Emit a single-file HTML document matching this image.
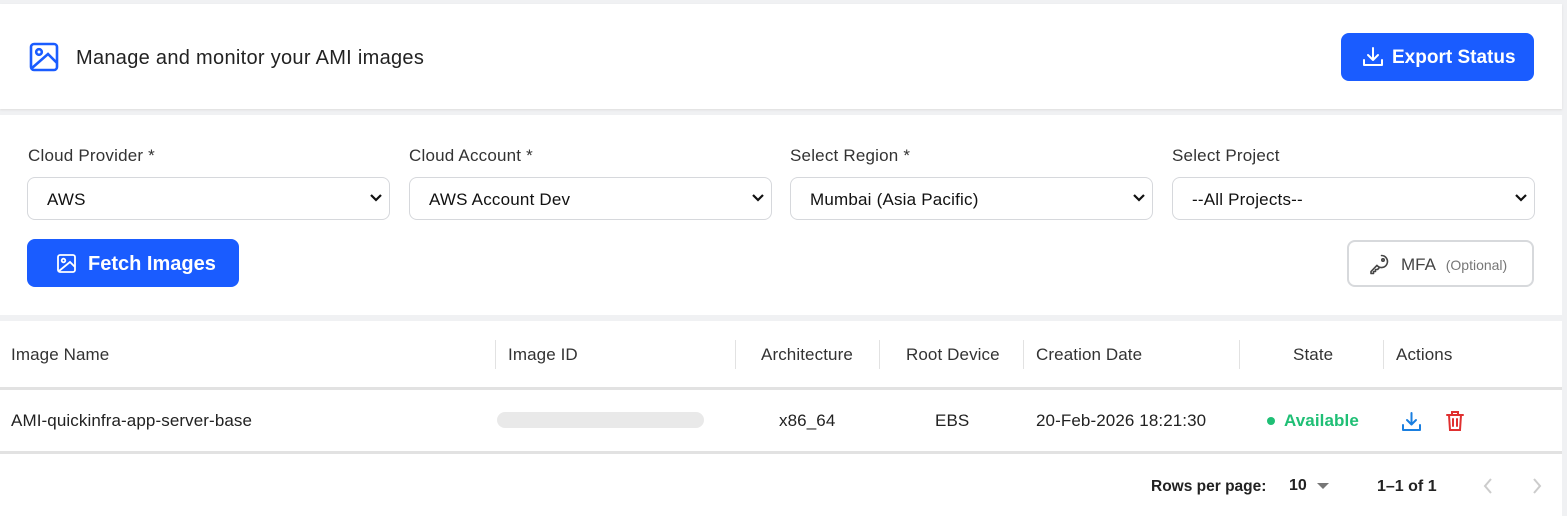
<!DOCTYPE html>
<html><head><meta charset="utf-8"><style>
*{box-sizing:border-box;margin:0;padding:0}
body{width:1567px;height:516px;background:#f0f1f3;font-family:"Liberation Sans",sans-serif;position:relative;overflow:hidden;color:#222}
.card{position:absolute;left:0;width:1562px;background:#fff}
.a{position:absolute;white-space:nowrap}
.sel{position:absolute;top:177px;width:363px;height:43px;border:1px solid #d6d8dc;border-radius:8px;font-size:17px;color:#111;padding:12px 0 0 19px;letter-spacing:0.2px}
.sel svg{position:absolute;right:6px;top:15px}
.lbl{position:absolute;top:146px;font-size:17px;color:#333;letter-spacing:0.2px}
.th{position:absolute;top:345px;font-size:17px;color:#333;letter-spacing:0.1px}
.vl{position:absolute;top:340px;width:1px;height:29px;background:#e2e2e2}
.td{position:absolute;top:411px;font-size:17px;color:#222;letter-spacing:0.1px}
</style></head><body>
<div class="card" style="top:4px;height:105px;box-shadow:0 1px 2px #ddd"></div>
<svg class="a" style="left:29px;top:42px" width="30" height="30" viewBox="0 0 30 30" fill="none" stroke="#1a5cff" stroke-width="2.6"><rect x="2" y="2" width="26" height="26" rx="3"/><circle cx="10" cy="10" r="2.8"/><path d="M3 26 L19 12 L28 21"/></svg>
<div class="a" style="left:76px;top:47px;font-size:20px;color:#222;letter-spacing:0.3px">Manage and monitor your AMI images</div>
<div class="a" style="left:1341px;top:33px;width:193px;height:48px;background:#1a5cff;border-radius:8px;color:#fff;font-size:19px;font-weight:bold;padding:14px 0 0 51px">Export Status</div>
<svg class="a" style="left:1362px;top:46px" width="22" height="22" viewBox="0 0 22 22" fill="none" stroke="#fff" stroke-width="2" stroke-linecap="round" stroke-linejoin="round"><path d="M11 2v12M6 9l5 5 5-5M2 14v5h18v-5"/></svg>

<div class="card" style="top:115px;height:200px"></div>
<div class="lbl" style="left:28px">Cloud Provider *</div>
<div class="lbl" style="left:409px">Cloud Account *</div>
<div class="lbl" style="left:790px">Select Region *</div>
<div class="lbl" style="left:1172px">Select Project</div>
<div class="sel" style="left:27px">AWS<svg width="14" height="10" viewBox="0 0 14 10" fill="none" stroke="#111" stroke-width="2.2"><path d="M2 2l5 5 5-5"/></svg></div>
<div class="sel" style="left:409px">AWS Account Dev<svg width="14" height="10" viewBox="0 0 14 10" fill="none" stroke="#111" stroke-width="2.2"><path d="M2 2l5 5 5-5"/></svg></div>
<div class="sel" style="left:790px">Mumbai (Asia Pacific)<svg width="14" height="10" viewBox="0 0 14 10" fill="none" stroke="#111" stroke-width="2.2"><path d="M2 2l5 5 5-5"/></svg></div>
<div class="sel" style="left:1172px">--All Projects--<svg width="14" height="10" viewBox="0 0 14 10" fill="none" stroke="#111" stroke-width="2.2"><path d="M2 2l5 5 5-5"/></svg></div>
<div class="a" style="left:27px;top:239px;width:212px;height:48px;background:#1a5cff;border-radius:8px;color:#fff;font-size:20px;font-weight:bold;padding:14px 0 0 61px">Fetch Images</div>
<svg class="a" style="left:57px;top:254px" width="20" height="20" viewBox="0 0 20 20" fill="none" stroke="#fff" stroke-width="1.8"><rect x="1" y="1" width="17" height="17" rx="2"/><circle cx="6.5" cy="6.5" r="1.8"/><path d="M2 17 L13 8 L18 13"/></svg>
<div class="a" style="left:1347px;top:240px;width:187px;height:47px;border:2px solid #d7d9dc;border-radius:8px;font-size:17px;color:#444;padding:13px 0 0 52px">MFA <span style="font-size:14px;color:#777;margin-left:6px">(Optional)</span></div>
<svg class="a" style="left:1368px;top:253px" width="22" height="22" viewBox="0 0 22 22" fill="none" stroke="#444" stroke-width="1.6" stroke-linecap="round" stroke-linejoin="round"><path d="M13.5 2.5a6 6 0 1 1-4.6 9.9L3 18.5v2h2.5v-2h2v-2h2l1.5-1.5"/><circle cx="15" cy="7" r="1.2"/></svg>

<div class="card" style="top:321px;height:195px"></div>
<div class="th" style="left:11px">Image Name</div>
<div class="vl" style="left:495px"></div>
<div class="th" style="left:508px">Image ID</div>
<div class="vl" style="left:735px"></div>
<div class="th" style="left:761px">Architecture</div>
<div class="vl" style="left:879px"></div>
<div class="th" style="left:906px">Root Device</div>
<div class="vl" style="left:1023px"></div>
<div class="th" style="left:1036px">Creation Date</div>
<div class="vl" style="left:1239px"></div>
<div class="th" style="left:1293px">State</div>
<div class="vl" style="left:1383px"></div>
<div class="th" style="left:1396px">Actions</div>
<div class="a" style="left:0;top:387px;width:1562px;height:3px;background:#e2e2e2"></div>
<div class="td" style="left:11px">AMI-quickinfra-app-server-base</div>
<div class="a" style="left:497px;top:412px;width:207px;height:16px;background:#e9e9e9;border-radius:8px"></div>
<div class="td" style="left:779px">x86_64</div>
<div class="td" style="left:935px">EBS</div>
<div class="td" style="left:1036px">20-Feb-2026 18:21:30</div>
<div class="a" style="left:1267px;top:417px;width:8px;height:8px;border-radius:50%;background:#1fbf75"></div>
<div class="td" style="left:1284px;color:#1fbf75;font-weight:bold;font-size:17px">Available</div>
<svg class="a" style="left:1401px;top:411px" width="21" height="21" viewBox="0 0 21 21" fill="none" stroke="#1a7fe0" stroke-width="2" stroke-linecap="round" stroke-linejoin="round"><path d="M10.5 2v11M6 9l4.5 4.5L15 9M2 14v5h17v-5"/></svg>
<svg class="a" style="left:1445px;top:410px" width="20" height="22" viewBox="0 0 20 22" fill="none" stroke="#e03030" stroke-width="2" stroke-linecap="round"><path d="M2 5h16M7 5V2h6v3M4 5l1 15h10l1-15M8 9v7M12 9v7"/></svg>
<div class="a" style="left:0;top:451px;width:1562px;height:3px;background:#e2e2e2"></div>
<div class="a" style="left:1151px;top:478px;font-size:15.5px;font-weight:bold;color:#222">Rows per page:</div>
<div class="a" style="left:1289px;top:477px;font-size:16px;font-weight:bold;color:#222">10</div>
<div class="a" style="left:1317px;top:483px;width:0;height:0;border-left:6px solid transparent;border-right:6px solid transparent;border-top:6px solid #777"></div>
<div class="a" style="left:1377px;top:478px;font-size:16px;font-weight:bold;color:#222">1–1 of 1</div>
<svg class="a" style="left:1481px;top:477px" width="14" height="18" viewBox="0 0 14 18" fill="none" stroke="#ccc" stroke-width="2"><path d="M10 2L4 9l6 7"/></svg>
<svg class="a" style="left:1530px;top:477px" width="14" height="18" viewBox="0 0 14 18" fill="none" stroke="#ccc" stroke-width="2"><path d="M4 2l6 7-6 7"/></svg>
</body></html>
